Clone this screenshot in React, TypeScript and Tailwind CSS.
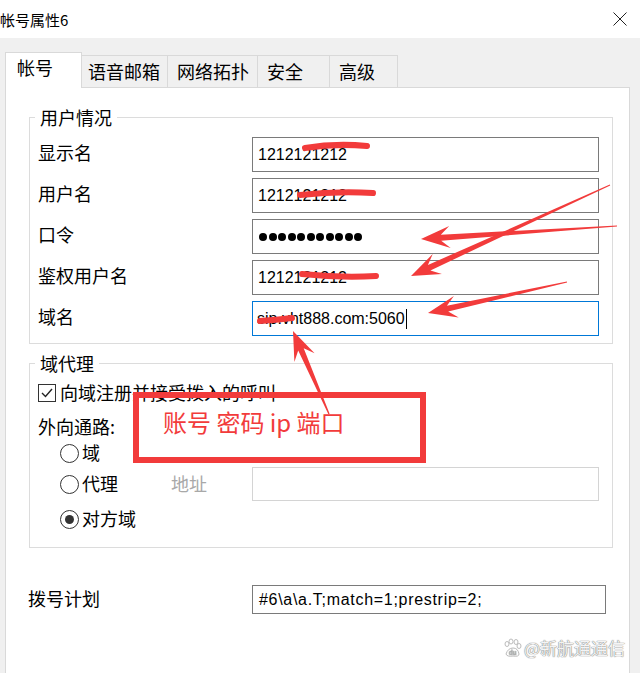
import React from "react";

type Pt = [number, number];

// tapered marker-style arrow, tail -> tip
const arrowPoints = (tail: Pt, tip: Pt, headL = 26, headW = 22, shaftW = 6) => {
  const dx = tip[0] - tail[0];
  const dy = tip[1] - tail[1];
  const len = Math.sqrt(dx * dx + dy * dy);
  const ux = dx / len;
  const uy = dy / len;
  const nx = -uy;
  const ny = ux;
  const bx = tip[0] - ux * headL;
  const by = tip[1] - uy * headL;
  const jx = bx + ux * 6;
  const jy = by + uy * 6;
  const pts: Pt[] = [
    [tail[0] + nx * 0.6, tail[1] + ny * 0.6],
    [jx + (nx * shaftW) / 2, jy + (ny * shaftW) / 2],
    [bx - ux * 3 + (nx * headW) / 2, by - uy * 3 + (ny * headW) / 2],
    tip,
    [bx - ux * 3 - (nx * headW) / 2, by - uy * 3 - (ny * headW) / 2],
    [jx - (nx * shaftW) / 2, jy - (ny * shaftW) / 2],
    [tail[0] - nx * 0.6, tail[1] - ny * 0.6],
  ];
  return pts.map((p) => p[0].toFixed(1) + "," + p[1].toFixed(1)).join(" ");
};

const arrows: [Pt, Pt][] = [
  [[617, 226], [421, 239]],
  [[610, 185], [411, 276]],
  [[567, 282], [428, 313]],
  [[329, 414], [293, 331]],
];

const tabs = [
  { label: "语音邮箱", w: "w-[86px]", pl: "pl-[6px]" },
  { label: "网络拓扑", w: "w-[90px]", pl: "pl-[9px]" },
  { label: "安全", w: "w-[72px]", pl: "pl-[9px]" },
  { label: "高级", w: "w-[68px]", pl: "pl-[9px]" },
];

const Field = ({ label, children, focused }: { label: string; children: React.ReactNode; focused?: boolean }) => (
  <div className="flex items-center h-[35px]">
    <span className="w-[214px] mb-[5px] text-[18px] leading-[20px]">{label}</span>
    <div
      className={
        focused
          ? "w-[347px] h-[35px] border border-[#0078d7] flex items-center pl-[4px] font-['Liberation_Sans',sans-serif] text-[16px]"
          : "w-[347px] h-[35px] border border-[#7a7a7a] flex items-center pl-[5px] font-['Liberation_Sans',sans-serif] text-[16px]"
      }
    >
      {children}
    </div>
  </div>
);

const Radio = ({ checked }: { checked?: boolean }) => (
  <span className="w-[19px] h-[19px] rounded-full border border-[#333] bg-white flex items-center justify-center shrink-0">
    {checked && <span className="w-[9px] h-[9px] rounded-full bg-[#333]" />}
  </span>
);

export default function App() {
  return (
    <div className="relative w-[640px] h-[673px] overflow-hidden bg-white text-black font-['Noto_Sans_CJK_SC',sans-serif]">
      {/* title bar */}
      <div className="h-[38px] flex items-center justify-between pr-[13px]">
        <span className="text-[15px] leading-none">帐号属性6</span>
        <svg width="14" height="14" viewBox="0 0 14 14">
          <path d="M0.5 0.5 L13.5 13.5 M13.5 0.5 L0.5 13.5" stroke="#222" strokeWidth="1" />
        </svg>
      </div>

      <div className="bg-[#f0f0f0] h-[635px] pl-[5px] pr-[10px] flex flex-col">
        {/* tabs */}
        <div className="relative z-10 flex items-end h-[50px] -mb-[1px]">
          <div className="w-[77px] h-[36px] bg-white border border-b-0 border-[#d9d9d9] pl-[11px] pt-[4px] text-[18px] leading-[20px]">
            帐号
          </div>
          {tabs.map((t) => (
            <div
              key={t.label}
              className={`${t.w} ${t.pl} h-[32px] mb-[1px] pb-[2px] border border-l-0 border-b-0 border-[#d9d9d9] bg-[#f0f0f0] flex items-center text-[18px] leading-[20px]`}
            >
              {t.label}
            </div>
          ))}
        </div>

        {/* tab panel */}
        <div className="flex-1 bg-white border border-b-0 border-[#d9d9d9] flex flex-col">
          <fieldset className="ml-[23px] mr-[16px] mt-[19px] border border-[#dcdcdc]">
            <legend className="ml-[5px] px-[5px] text-[18px] leading-[20px]">用户情况</legend>
            <div className="pl-[8px] pt-[10px] pb-[7px] flex flex-col gap-[6px]">
              <Field label="显示名">1212121212</Field>
              <Field label="用户名">1212121212</Field>
              <Field label="口令">
                <div className="flex gap-[1.5px] pl-[1px]">
                  {Array.from({ length: 11 }).map((_, i) => (
                    <span key={i} className="w-[8px] h-[8px] rounded-full bg-black" />
                  ))}
                </div>
              </Field>
              <Field label="鉴权用户名">1212121212</Field>
              <Field label="域名" focused>
                sip.vht888.com:5060
                <span className="w-[1px] h-[20px] bg-black ml-[1px]" />
              </Field>
            </div>
          </fieldset>

          <fieldset className="ml-[23px] mr-[16px] mt-[9px] border border-[#dcdcdc]">
            <legend className="ml-[5px] px-[5px] text-[18px] leading-[20px]">域代理</legend>
            <div className="pl-[8px] pt-[10px] pb-[18px] flex flex-col text-[18px] leading-[20px]">
              <div className="flex items-center h-[20px]">
                <span className="w-[18px] h-[18px] border border-[#333] flex items-center justify-center">
                  <svg width="14" height="14" viewBox="0 0 14 14">
                    <path d="M2 7 L5.5 10.5 L12 3" stroke="#222" strokeWidth="1.4" fill="none" />
                  </svg>
                </span>
                <span className="ml-[4px] -mt-[2px]">向域注册并接受拨入的呼叫</span>
              </div>
              <div className="mt-[13px] h-[20px]">外向通路:</div>
              <div className="mt-[7px] h-[20px] flex items-center pl-[22px] gap-[3px]">
                <Radio />
                <span className="-mt-[2px]">域</span>
              </div>
              <div className="mt-[4px] flex items-center">
                <div className="w-[133px] flex items-center pl-[22px] gap-[3px]">
                  <Radio />
                  <span className="-mt-[2px]">代理</span>
                </div>
                <span className="w-[81px] -mt-[2px] text-[#a8a8a8]">地址</span>
                <div className="w-[347px] h-[34px] border border-[#d4d4d4]" />
              </div>
              <div className="mt-[8px] h-[20px] flex items-center pl-[22px] gap-[3px]">
                <Radio checked />
                <span className="-mt-[2px]">对方域</span>
              </div>
            </div>
          </fieldset>

          <div className="mt-[37px] pl-[22px] flex items-center">
            <span className="w-[224px] mb-[3px] text-[18px] leading-[20px]">拨号计划</span>
            <div className="w-[354px] h-[29px] border border-[#7a7a7a] flex items-center pl-[6px] font-['Liberation_Sans',sans-serif] text-[16px] tracking-[0.7px]">
              #6\a\a.T;match=1;prestrip=2;
            </div>
          </div>
        </div>
      </div>

      {/* red annotation box */}
      <div className="absolute left-[133px] top-[392px] w-[293px] h-[71px] border-[6px] border-[#f23b3b] pl-[24px] pt-[9px] text-[24px] leading-[30px] text-[#f23b3b]">
        账号 密码 ip 端口
      </div>

      {/* red scribbles and arrows */}
      <svg className="absolute left-0 top-0 pointer-events-none" width="640" height="673">
        <g stroke="#f23b3b" strokeWidth="6" strokeLinecap="round" fill="none">
          <path d="M305 148 Q335 143 367 146" />
          <path d="M300 195 Q336 191 373 193" />
          <path d="M302 274 Q340 278 376 276" />
          <path d="M260 321 Q276 320 292 318" />
        </g>
        <g fill="#f23b3b">
          {arrows.map(([a, b], i) => (
            <polygon key={i} points={arrowPoints(a, b)} />
          ))}
        </g>
      </svg>

      {/* watermark */}
      <div className="absolute right-[15px] bottom-[15px] flex items-center gap-[2px] text-[17px] leading-[20px] text-[#f4f4f4] [text-shadow:0_0_1px_#777,0_0_1px_#777]">
        <svg width="20" height="20" viewBox="0 0 20 20" fill="none" stroke="#bbb" strokeWidth="1">
          <ellipse cx="5" cy="6" rx="2" ry="2.5" />
          <ellipse cx="9" cy="3.5" rx="2" ry="2.5" />
          <ellipse cx="14" cy="4" rx="2" ry="2.5" />
          <ellipse cx="17" cy="8" rx="2" ry="2.5" />
          <path d="M4 16 Q6 10 11 10 Q16 10 17 16 Q17 19 11 18 Q5 19 4 16 Z" />
          <text x="7" y="17" fontSize="6" fill="#bbb" stroke="none">du</text>
        </svg>
        <span>@新航通通信</span>
      </div>
    </div>
  );
}
